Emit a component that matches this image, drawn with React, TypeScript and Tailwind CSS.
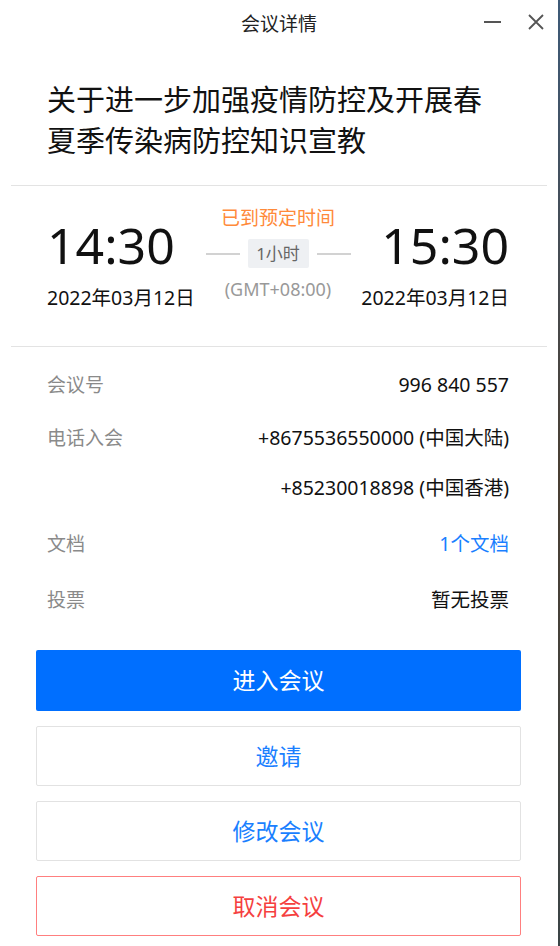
import React from "react";

const font = {
  fontFamily: '"Noto Sans", "Noto Sans CJK SC", sans-serif',
};

// One label/value row in the info list
function InfoRow({
  label,
  value,
  className,
  valueClass = "text-[#111]",
}: {
  label?: string;
  value: string;
  className?: string;
  valueClass?: string;
}) {
  return (
    <div className={`flex h-[24px] items-center justify-between ${className ?? ""}`}>
      <span className="text-[19px] leading-[24px] text-[#8a8a8a]">{label}</span>
      <span className={`text-[19.5px] leading-[24px] ${valueClass}`}>{value}</span>
    </div>
  );
}

export default function App() {
  return (
    <div className="flex h-[946px] w-[560px] overflow-hidden bg-white" style={font}>
      <div className="flex w-[558px] flex-col bg-white">
        {/* Title bar */}
        <div className="relative flex h-[46px] items-center justify-center pt-[2px]">
          <span className="text-[19px] text-[#222]">会议详情</span>
          <div className="absolute right-[12px] top-[12px] flex items-center gap-[24px]">
            <svg width="20" height="20" viewBox="0 0 20 20">
              <line x1="2" y1="10" x2="19" y2="10" stroke="#555" strokeWidth="2" />
            </svg>
            <svg width="20" height="20" viewBox="0 0 20 20">
              <path d="M3 3 L17 17 M17 3 L3 17" stroke="#555" strokeWidth="1.8" />
            </svg>
          </div>
        </div>

        {/* Meeting title */}
        <h1 className="px-[47px] pb-[24px] pt-[33px] text-[29px] font-normal leading-[41px] text-[#111]">
          关于进一步加强疫情防控及开展春
          <br />
          夏季传染病防控知识宣教
        </h1>

        <div className="mx-[11px] h-px bg-[#e3e3e3]" />

        {/* Time section */}
        <div className="flex items-start justify-between pb-[36px] pl-[47px] pr-[49px] pt-[19px]">
          <div className="mt-[12px] flex flex-col">
            <span className="text-[50px] leading-[56px] text-[#111]">14:30</span>
            <span className="mt-[13px] text-[19.5px] leading-[24px] text-[#111]">2022年03月12日</span>
          </div>
          <div className="flex flex-col items-center">
            <span className="mt-[1px] text-[19px] leading-[24px] text-[#ff8a3a]">已到预定时间</span>
            <div className="mt-[9px] flex items-center gap-[8px]">
              <div className="h-[2px] w-[34px] bg-[#d2d2d2]" />
              <span className="flex h-[29px] w-[61px] items-center justify-center rounded-[2px] bg-[#eef0f3] text-[17px] text-[#666]">
                1小时
              </span>
              <div className="h-[2px] w-[34px] bg-[#d2d2d2]" />
            </div>
            <span className="mt-[10px] text-[18px] leading-[22px] text-[#999]">(GMT+08:00)</span>
          </div>
          <div className="mt-[12px] flex flex-col items-end">
            <span className="text-[50px] leading-[56px] text-[#111]">15:30</span>
            <span className="mt-[13px] text-[19.5px] leading-[24px] text-[#111]">2022年03月12日</span>
          </div>
        </div>

        <div className="mx-[11px] h-px bg-[#e3e3e3]" />

        {/* Details */}
        <div className="flex flex-col pl-[47px] pr-[49px] pt-[26px]">
          <InfoRow label="会议号" value="996 840 557" />
          <InfoRow label="电话入会" value="+8675536550000 (中国大陆)" className="mt-[29px]" />
          <InfoRow value="+85230018898 (中国香港)" className="mt-[26px]" />
          <InfoRow label="文档" value="1个文档" valueClass="text-[#1a7fff]" className="mt-[32px]" />
          <InfoRow label="投票" value="暂无投票" className="mt-[32px]" />
        </div>

        {/* Actions */}
        <div className="ml-[36px] mt-[38px] flex w-[485px] flex-col gap-[15px]">
          <button className="h-[61px] rounded-[2px] bg-[#006fff] text-[23px] text-white">进入会议</button>
          <button className="h-[60px] rounded-[2px] border border-[#e2e2e2] bg-white text-[23px] text-[#1a7fff]">
            邀请
          </button>
          <button className="h-[60px] rounded-[2px] border border-[#e2e2e2] bg-white text-[23px] text-[#1a7fff]">
            修改会议
          </button>
          <button className="h-[60px] rounded-[2px] border border-[#ff7f7f] bg-white text-[23px] text-[#f53f3f]">
            取消会议
          </button>
        </div>
      </div>
      {/* desktop behind the window edge */}
      <div className="w-[2px] bg-gradient-to-b from-[#3d5a78] via-[#4a3f33] to-[#3b4446]" />
    </div>
  );
}
